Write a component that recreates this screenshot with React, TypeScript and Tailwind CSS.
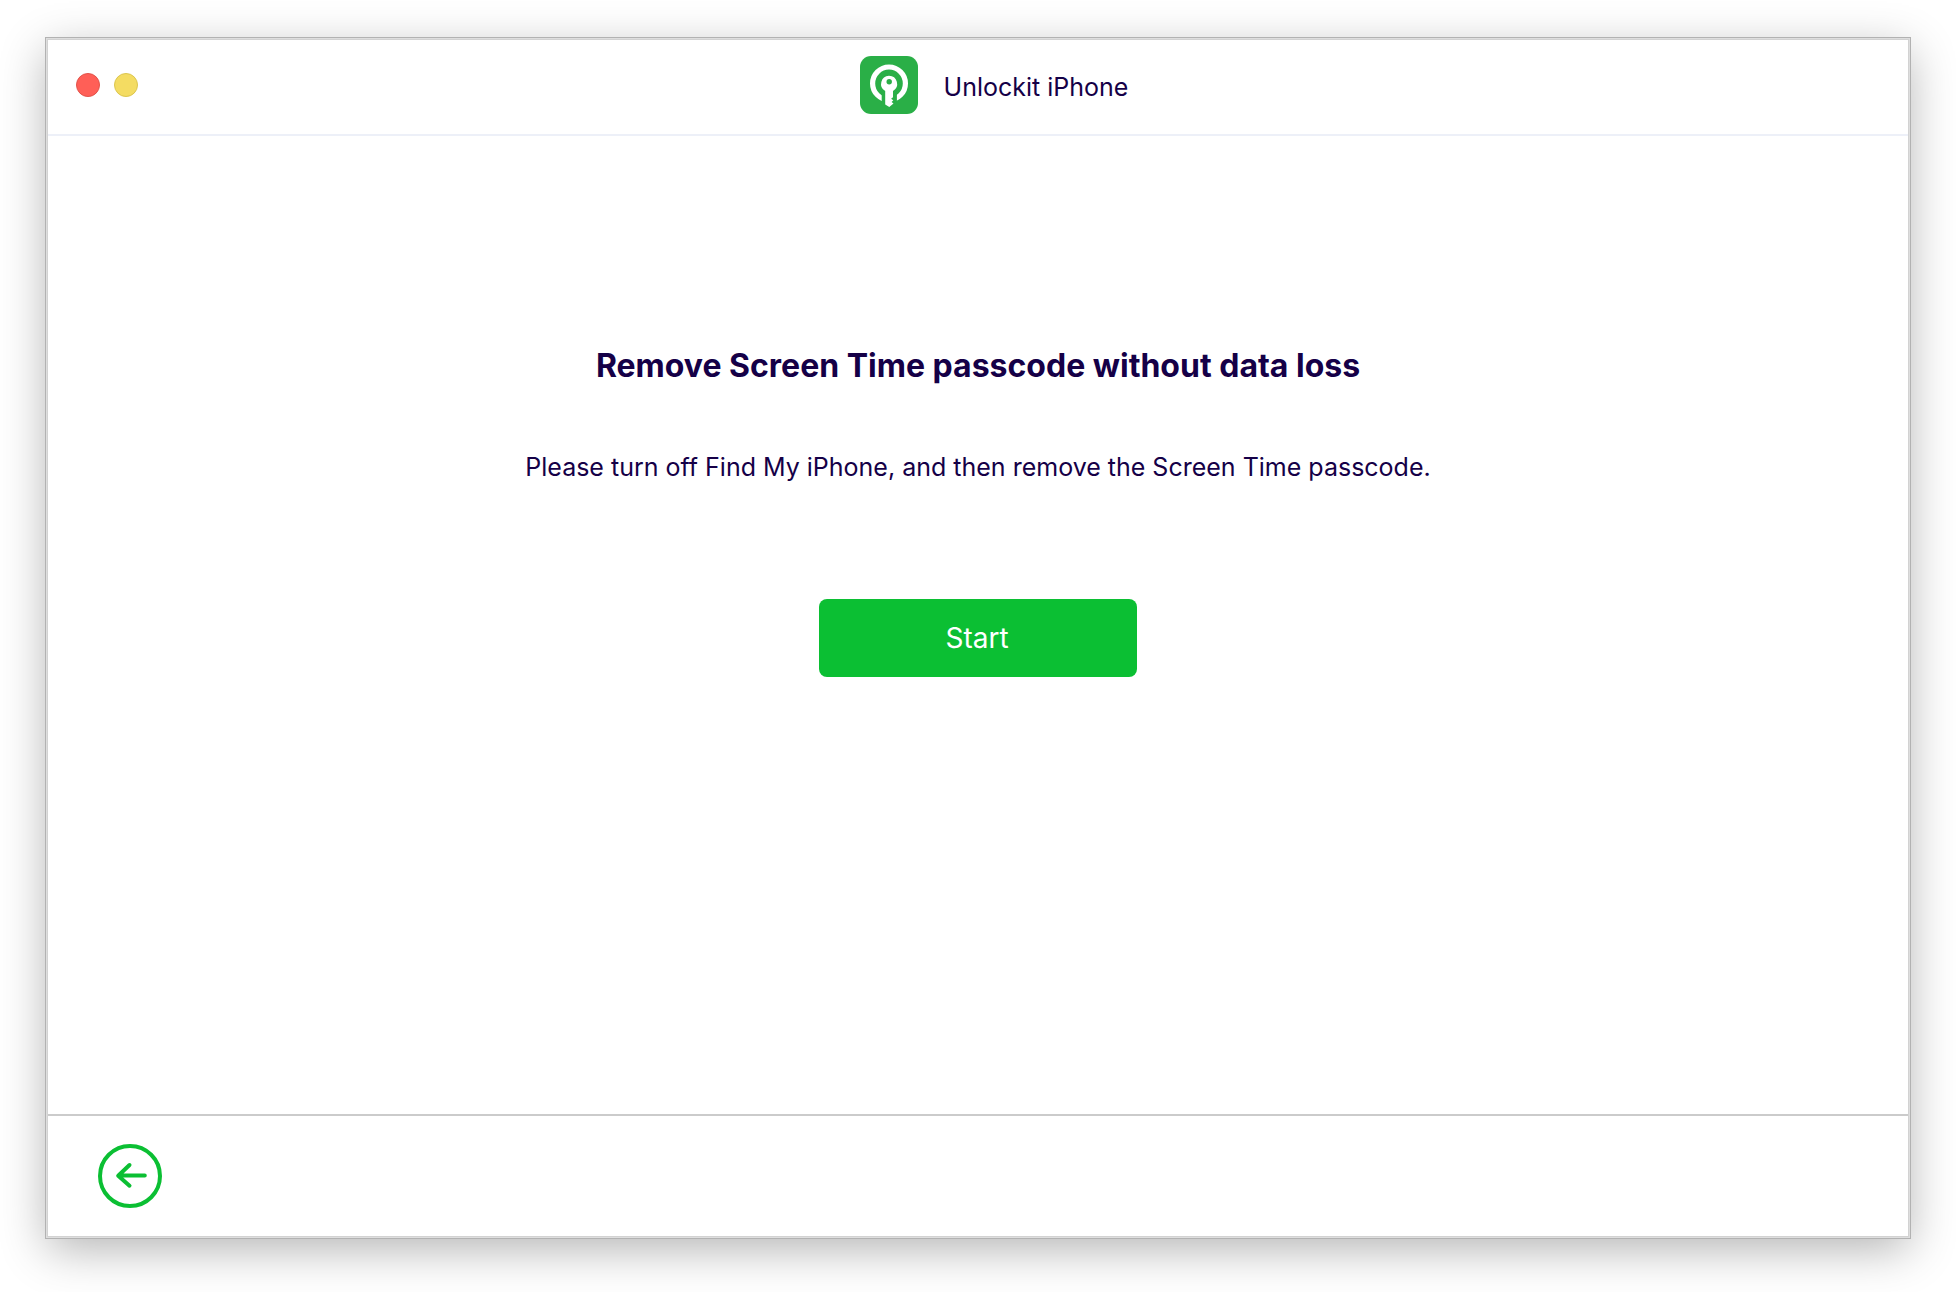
import React from "react";

function Logo() {
  return (
    <svg viewBox="0 0 58 58" className="h-[58px] w-[58px]" aria-hidden="true">
      <rect width="58" height="58" rx="11" fill="#2aaf47" />
      <circle cx="29" cy="27.4" r="16.4" fill="none" stroke="#fff" strokeWidth="5.2" />
      <path d="M21.7 35.5 24 33h12l.9 2.5V50H21.7z" fill="#2aaf47" />
      <path
        d="M29 19.7a8.2 8.2 0 0 1 4 15.3v6.2l-1.9 1.5 2.2 1.6-1.7 1.6 1.9 1.7L29.3 51 25.2 48.4V35A8.2 8.2 0 0 1 29 19.7z"
        fill="#fff"
      />
      <circle cx="29.2" cy="25.8" r="2.7" fill="#2aaf47" />
    </svg>
  );
}

function BackIcon() {
  return (
    <svg viewBox="0 0 64 64" className="h-16 w-16" fill="none" stroke="#0bbf33" aria-hidden="true">
      <circle cx="32" cy="32" r="30" strokeWidth="4" />
      <path
        d="M46.8 31.6H20.5M31.5 21 20.2 31.8 31.5 41.7"
        strokeWidth="4"
        strokeLinecap="round"
        strokeLinejoin="round"
      />
    </svg>
  );
}

export default function App() {
  return (
    <div className="flex min-h-screen flex-col bg-white px-[47px] pt-[39px] pb-[55px] font-['Inter','Liberation_Sans',sans-serif] text-[#150047]">
      <div className="flex flex-1 flex-col border border-[#d2d2d2] bg-white shadow-[0_0_0_1px_#dedede,0_0_0_2px_#b2b2b2,0_12px_44px_rgba(0,0,0,0.3)]">
        <header className="grid h-24 grid-cols-[1fr_auto_1fr] items-center border-b-2 border-[#edf0f8] px-7 pb-1">
          <div className="flex gap-3.5">
            <button type="button" aria-label="Close" className="h-6 w-6 rounded-full border border-[#e2534a] bg-[#ff5f57]" />
            <button type="button" aria-label="Minimize" className="h-6 w-6 rounded-full border border-[#dcc64f] bg-[#f4dc62]" />
          </div>
          <div className="flex items-center gap-[26px] pl-8">
            <Logo />
            <span className="pt-1 text-[25px] leading-8">Unlockit iPhone</span>
          </div>
        </header>
        <main className="flex flex-1 flex-col items-center px-8 pt-[210px] text-center">
          <h1 className="text-[32px] leading-10 font-bold">
            Remove Screen Time passcode without data loss
          </h1>
          <p className="mt-[65px] text-[25px] leading-8">
            Please turn off Find My iPhone, and then remove the Screen Time passcode.
          </p>
          <button
            type="button"
            className="mt-[116px] h-[78px] w-[318px] rounded-lg bg-[#0bbf33] pr-0.5 text-[28px] text-white"
          >
            Start
          </button>
        </main>
        <footer className="flex items-center border-t-2 border-[#cbcbcb] px-[50px] py-7">
          <button type="button" aria-label="Back" className="rounded-full">
            <BackIcon />
          </button>
        </footer>
      </div>
    </div>
  );
}
